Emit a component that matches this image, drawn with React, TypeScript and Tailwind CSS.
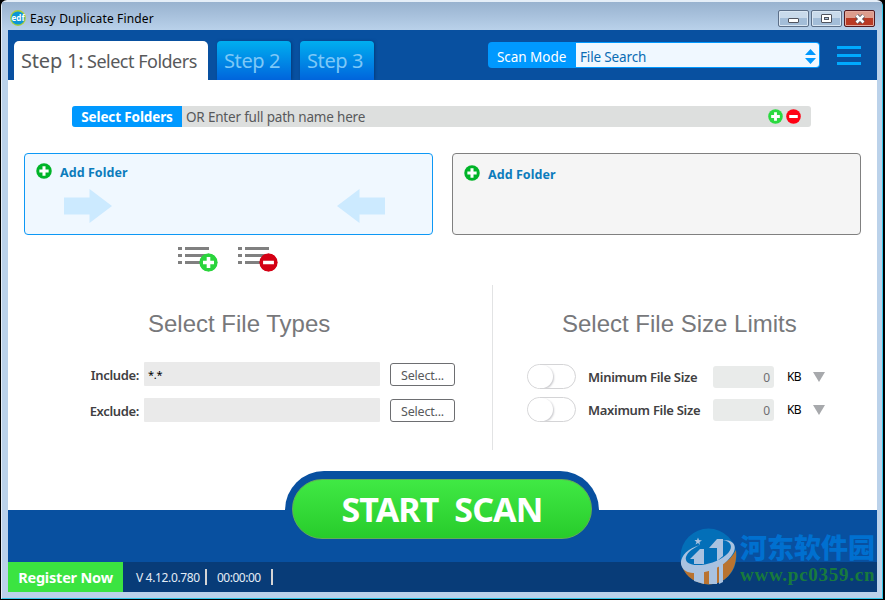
import React from 'react';

interface IconProps {
  className?: string;
}

const PlusCircle: React.FC<IconProps> = ({ className }) => (
  <svg viewBox="0 0 20 20" className={className} fill="none">
    <circle cx="10" cy="10" r="9.7" fill="currentColor" />
    <path d="M10 4.2V15.8M4.2 10H15.8" stroke="#fff" strokeWidth="3.8" />
  </svg>
);

const MinusCircle: React.FC<IconProps> = ({ className }) => (
  <svg viewBox="0 0 20 20" className={className} fill="none">
    <circle cx="10" cy="10" r="9.7" fill="currentColor" />
    <path d="M4.3 10H15.7" stroke="#fff" strokeWidth="3.8" />
  </svg>
);

const ListIcon: React.FC<IconProps> = ({ className }) => (
  <svg viewBox="0 0 31 17" className={className} fill="#808080" shapeRendering="crispEdges">
    <path d="M0 0h4v3H0zM7 0h24v3H7zM0 7h4v3H0zM7 7h24v3H7zM0 14h4v3H0zM7 14h24v3H7z" />
  </svg>
);

const Arrow: React.FC<IconProps> = ({ className }) => (
  <svg viewBox="0 0 48 34" className={className} fill="#cceaff">
    <path d="M0 8.500H25.500V0L48 17L25.500 34V25.500H0Z" />
  </svg>
);

const AppLogo: React.FC = () => (
  <svg width="16" height="16" viewBox="0 0 16 16" className="shrink-0">
    <circle cx="8" cy="8" r="7.900" fill="#a9cf3a" />
    <circle cx="8" cy="8" r="6.600" fill="#0b95d6" />
    <text x="8" y="10.600" textAnchor="middle" fontSize="8" fontWeight="700" fill="#fff" fontFamily="Noto Sans, sans-serif" textLength="13">edf</text>
  </svg>
);

const TitleBar: React.FC = () => (
  <div className="flex h-[28px] shrink-0 items-start bg-gradient-to-b from-[#98b2cf] to-[#b9d1ea] pl-2 pr-[7px]">
    <div className="flex h-[31px] items-center gap-1">
      <AppLogo />
      <span className="pt-[2px] text-[12px] tracking-[0.15px] text-black">Easy Duplicate Finder</span>
    </div>
    <div className="ml-auto flex gap-[2px] pt-[8px]">
      <button className="flex h-[17px] w-[31px] items-center justify-center rounded-[2px] border border-[#5c6f88] bg-gradient-to-b from-[#c9daeb] from-50% to-[#a3bdd8] to-50% shadow-[inset_0_0_0_1px_#d9e6f3]">
        <span className="mt-[4px] h-[5px] w-[11px] rounded-[1px] border border-[#50545f] bg-white" />
      </button>
      <button className="flex h-[17px] w-[31px] items-center justify-center rounded-[2px] border border-[#5c6f88] bg-gradient-to-b from-[#c9daeb] from-50% to-[#a3bdd8] to-50% shadow-[inset_0_0_0_1px_#d9e6f3]">
        <span className="flex h-[9px] w-[11px] items-center justify-center rounded-[1px] border border-[#50545f] bg-white">
          <span className="h-[3px] w-[5px] border border-[#50545f] bg-[#a9c0da]" />
        </span>
      </button>
      <button className="flex h-[17px] w-[31px] items-center justify-center rounded-[2px] border border-[#521a20] bg-gradient-to-b from-[#dd9c8c] from-45% to-[#b93a24] to-50% shadow-[inset_0_0_0_1px_#e3aa9e]">
        <svg width="12" height="10" viewBox="0 0 12 10">
          <path d="M2.500 1.500L9.500 8.500M9.500 1.500L2.500 8.500" stroke="#50545f" strokeWidth="4.200" />
          <path d="M2.500 1.500L9.500 8.500M9.500 1.500L2.500 8.500" stroke="#fff" strokeWidth="2.600" />
        </svg>
      </button>
    </div>
  </div>
);

const Header: React.FC = () => (
  <header className="flex h-[50px] shrink-0 items-start bg-[#0850a0] pl-[6px] pt-[11px]">
    <div className="flex h-[39px] w-[194px] items-center whitespace-nowrap rounded-t-[5px] bg-white pl-[7px] pt-[1px] text-[#58595b]">
      <span className="w-[66px] text-[20px] tracking-[-0.2px]">Step 1:</span>
      <span className="text-[18px] tracking-[-0.5px]">Select Folders</span>
    </div>
    <div className="ml-[9px] flex h-[39px] w-[74px] items-center rounded-t-[4px] bg-gradient-to-b from-[#00aeef] to-[#0064dc] pl-[7px] text-[20px] text-[#7dc8f7] shadow-[1px_0_3px_#043c7c]">
      <span className="whitespace-nowrap tracking-[-0.4px]">Step 2</span>
    </div>
    <div className="ml-[9px] flex h-[39px] w-[74px] items-center rounded-t-[4px] bg-gradient-to-b from-[#00aeef] to-[#0064dc] pl-[7px] text-[20px] text-[#7dc8f7] shadow-[1px_0_3px_#043c7c]">
      <span className="whitespace-nowrap tracking-[-0.4px]">Step 3</span>
    </div>
    <div className="ml-auto mt-px flex h-[26px] w-[332px] rounded-[4px] bg-[#0099ff] p-px text-[13.5px]">
      <span className="flex w-[87px] items-center whitespace-nowrap pl-[8px] pt-[4px] tracking-[-0.05px] text-white">Scan Mode</span>
      <div className="flex flex-1 items-center justify-between rounded-r-[3px] bg-[#f0f8ff] pl-1 pr-[3px]">
        <span className="pt-[4px] tracking-[-0.15px] text-[#0a6cb4]">File Search</span>
        <svg width="11" height="15" viewBox="0 0 11 15" fill="#0099ff" className="mt-[2px]">
          <path d="M5.500 0L11 6H0ZM0 9H11L5.500 15Z" />
        </svg>
      </div>
    </div>
    <div className="ml-[17px] mr-4 mt-[5px] flex w-6 flex-col gap-[5px]">
      <span className="h-[3px] bg-[#00aaff]" />
      <span className="h-[3px] bg-[#00aaff]" />
      <span className="h-[3px] bg-[#00aaff]" />
    </div>
  </header>
);

const PathBar: React.FC = () => (
  <div className="ml-16 mt-[26px] flex h-[21px] w-[739px] items-center overflow-hidden rounded-[3px] bg-[#dddfde]">
    <div className="flex h-full w-[110px] items-center justify-center bg-[#0099ff]">
      <span className="whitespace-nowrap pt-[2px] text-[13.5px] font-bold tracking-[-0.13px] text-white">Select Folders</span>
    </div>
    <span className="ml-1 pt-[2px] text-[13.5px] tracking-[-0.19px] text-[#58595b]">OR Enter full path name here</span>
    <PlusCircle className="ml-auto size-[15px] text-[#2bd940]" />
    <MinusCircle className="ml-[3px] mr-[10px] size-[15px] text-[#ff0012]" />
  </div>
);

const FolderPanels: React.FC = () => (
  <div className="mt-[26px] flex gap-[19px] pl-4">
    <div className="h-[82px] w-[409px] rounded-[4px] border border-[#0d98f5] bg-[#f0f8ff] pl-[11px] pt-[8px]">
      <div className="flex h-[18px] items-center gap-2">
        <PlusCircle className="size-4 text-[#00b428]" />
        <span className="pt-[5px] text-[12.5px] font-bold tracking-[0.05px] text-[#0c7cbc]">Add Folder</span>
      </div>
      <div className="mt-[9px] flex justify-between pl-7 pr-[47px]">
        <Arrow className="h-[34px] w-12" />
        <Arrow className="h-[34px] w-12 rotate-180" />
      </div>
    </div>
    <div className="h-[82px] w-[409px] rounded-[4px] border border-[#808080] bg-[#f5f5f5] pl-[11px] pt-[10px]">
      <div className="flex h-[18px] items-center gap-2">
        <PlusCircle className="size-4 text-[#00b428]" />
        <span className="pt-[5px] text-[12.5px] font-bold tracking-[0.05px] text-[#0c7cbc]">Add Folder</span>
      </div>
    </div>
  </div>
);

const ListActions: React.FC = () => (
  <div className="mt-3 flex h-[26px] gap-5 pl-[170px]">
    <div className="relative w-10">
      <ListIcon className="h-[17px] w-[31px]" />
      <PlusCircle className="absolute left-[21px] top-[6px] size-[19px] rounded-full text-[#2ad43c]" />
    </div>
    <div className="relative w-10">
      <ListIcon className="h-[17px] w-[31px]" />
      <MinusCircle className="absolute left-[21px] top-[6px] size-[19px] rounded-full text-[#d40014]" />
    </div>
  </div>
);

const TypeRow: React.FC<{ label: string; value: string }> = ({ label, value }) => (
  <div className="flex h-6 items-center">
    <span className="w-[132px] pr-[1px] pt-[3px] text-right text-[13px] font-semibold tracking-[-0.35px] text-[#414042]">{label}</span>
    <div className="ml-1 flex h-6 w-[236px] items-center rounded-[1px] bg-[#eaeaea] pl-1 pt-[2px] text-[11px] tracking-[-0.2px] text-black">{value}</div>
    <button className="ml-[10px] flex h-[23px] w-[65px] items-center justify-center rounded-[3px] border border-[#6d6e71] bg-white pt-[4px] text-[12.5px] tracking-[-0.2px] text-[#58595b]">Select...</button>
  </div>
);

const SizeRow: React.FC<{ label: string }> = ({ label }) => (
  <div className="flex h-[25px] items-center">
    <div className="h-[25px] w-[49px] overflow-hidden rounded-full border border-[#d4d4d6] bg-white">
      <div className="h-[23px] w-[25px] rounded-full bg-white shadow-[1px_1px_2px_#c8c8cc]" />
    </div>
    <span className="ml-3 w-[125px] whitespace-nowrap pt-[2px] text-[13px] font-semibold tracking-[-0.3px] text-[#414042]">{label}</span>
    <div className="flex h-[22px] w-[61px] items-center justify-end rounded-[3px] bg-[#e9ebea] pr-1 pt-[2px] text-[12px] text-[#6d6e71]">0</div>
    <span className="ml-[13px] w-[26px] text-[12px] tracking-[-0.6px] text-black">KB</span>
    <svg width="12" height="10" viewBox="0 0 12 10" fill="#a7a9ac">
      <path d="M0 0H12L6 10Z" />
    </svg>
  </div>
);

const Options: React.FC = () => (
  <div className="mt-[12px] flex h-[165px]">
    <div className="w-[485px] border-r border-[#e2e3e4] pt-[25px]">
      <h2 className="pl-[140px] font-['Liberation_Sans',sans-serif] text-[24px] leading-[28px] text-[#77787b]">Select File Types</h2>
      <div className="mt-6 flex flex-col gap-3">
        <TypeRow label="Include:" value="*.*" />
        <TypeRow label="Exclude:" value="" />
      </div>
    </div>
    <div className="pl-[34px] pt-[25px]">
      <h2 className="pl-[35px] font-['Liberation_Sans',sans-serif] text-[24px] leading-[28px] text-[#77787b]">Select File Size Limits</h2>
      <div className="mt-[26px] flex flex-col gap-2">
        <SizeRow label="Minimum File Size" />
        <SizeRow label="Maximum File Size" />
      </div>
    </div>
  </div>
);

const ScanDock: React.FC = () => (
  <div className="flex h-[52px] shrink-0 items-start justify-center bg-[#0850a0]">
    <div className="-mt-[39px] mr-[1px] h-[78px] w-[314px] rounded-t-[39px] bg-[#0850a0] px-[7px] pt-2">
      <button className="flex h-[60px] w-full items-center justify-center rounded-full border border-[#64ad55] bg-gradient-to-b from-[#40e944] to-[#27cc2b]">
        <span className="whitespace-nowrap pt-[1px] text-[34px] font-bold tracking-[-0.9px] text-white [word-spacing:8px]">START SCAN</span>
      </button>
    </div>
  </div>
);

const StatusBar: React.FC = () => (
  <footer className="flex h-[30px] shrink-0 items-center bg-[#083c78] text-[12px] text-[#e4edf6]">
    <div className="flex h-full w-[115px] items-center justify-center bg-[#3be441]">
      <span className="whitespace-nowrap pt-[2px] text-[14.5px] font-bold tracking-[-0.2px] text-white">Register Now</span>
    </div>
    <span className="ml-[13px] w-[69px] whitespace-nowrap pt-[2px] tracking-[-0.35px]">V 4.12.0.780</span>
    <span className="h-4 w-[2px] bg-[#d5d5d5]" />
    <span className="ml-[10px] w-[54px] whitespace-nowrap pt-[2px] tracking-[-0.5px]">00:00:00</span>
    <span className="h-4 w-[2px] bg-[#d5d5d5]" />
  </footer>
);

const Watermark: React.FC = () => (
  <div className="absolute left-[680px] top-[528px] flex gap-[3px]">
    <svg width="57" height="57" viewBox="0 0 57 57">
      <circle cx="28.500" cy="28.500" r="28" fill="#036fb8" />
      <path d="M2 38C24 46 48 39 56 22C58 43 45 56 29 56.500C17 56 6 50 2 38Z" fill="#b97330" />
      <path d="M14 42H24V56L14 53ZM29 42L37 38V56H29ZM39 37L43 34V54L39 56Z" fill="#a9c2e0" />
      <path d="M18 9.500L19 12L22 12.500L19.500 14L20 17L18 15L15.500 16.500L16.500 14L14.500 12L17 12Z" fill="#a9c2e0" />
      <path d="M20 17C5 21 -2 32 2 39C7 50 34 45 47 33C59 22 57 11 42 12C52 13 54 20 46 27C35 37 13 40 7 34C3 29 9 22 20 17Z" fill="#a9c2e0" />
      <path d="M10 31L20 21H24V36H14V31ZM29 20L37 11H43V28L37 33V20Z" fill="#a9c2e0" />
    </svg>
    <div className="whitespace-nowrap pt-[4px]">
      <div className="h-[31px] font-['Noto_Sans_CJK_SC',sans-serif] text-[27px] font-black leading-[29px] text-[#0070d0]">河东软件园</div>
      <div className="h-[22px] font-['Liberation_Serif',serif] text-[19px] font-bold leading-[24px] tracking-[0.75px] text-[#187a3d]">www.pc0359.cn</div>
    </div>
  </div>
);

const App: React.FC = () => {
  return (
    <div className="relative h-[600px] w-[885px] overflow-hidden bg-black pb-px pl-px pr-[2px] font-['Noto_Sans',sans-serif]">
      <div className="flex h-full flex-col rounded-t-[6px] border border-t-2 border-[#e5eef8] border-b-[#34c6e8] border-r-[#34c6e8] bg-[#bbd2ea]">
        <TitleBar />
        <div className="ml-[6px] flex h-[562px] w-[869px] shrink-0 flex-col">
          <Header />
          <main className="h-[430px] shrink-0 bg-white">
            <PathBar />
            <FolderPanels />
            <ListActions />
            <Options />
          </main>
          <ScanDock />
          <StatusBar />
        </div>
      </div>
      <Watermark />
    </div>
  );
};

export default App;
